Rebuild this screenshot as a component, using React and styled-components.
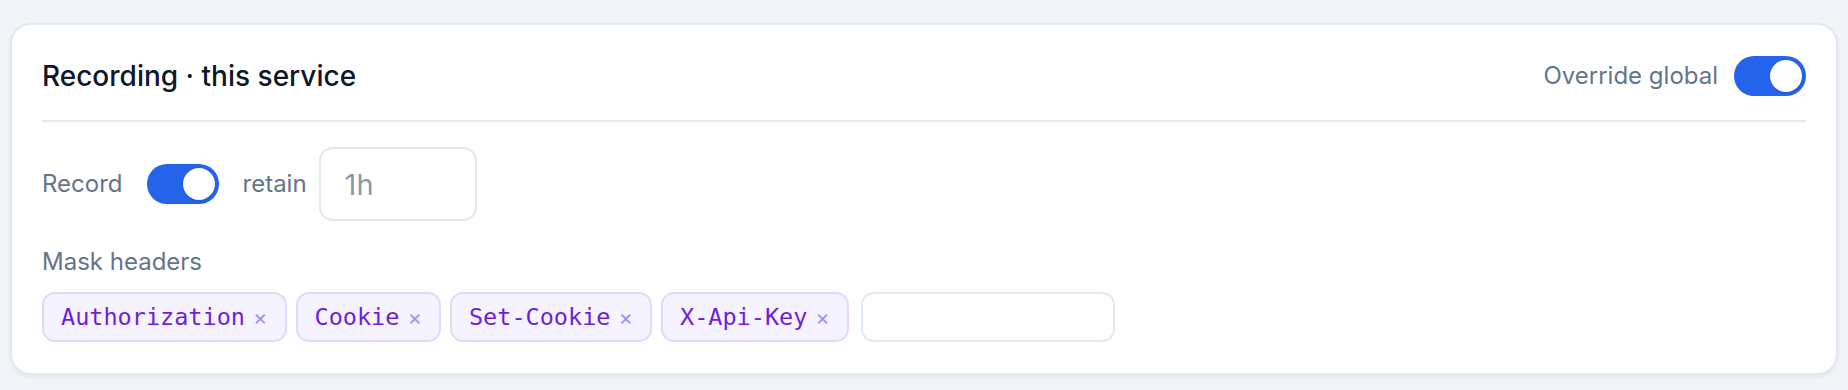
import React from 'react'
import styled, { createGlobalStyle } from 'styled-components'

const GlobalStyle = createGlobalStyle`
	* { box-sizing: border-box; }
	html, body {
		margin: 0;
		padding: 0;
		background: #f1f5f9;
		font-family: Inter, "Noto Sans", sans-serif;
	}
`

const Page = styled.div`
	padding: 23px 10px 16px 10px;
`

const Card = styled.section`
	background: #fff;
	border: 2px solid #e2e8f0;
	border-radius: 21px;
	box-shadow: 0 2px 4px rgba(15, 23, 42, 0.07);
	padding: 31px 30px;
`

const Header = styled.header`
	display: flex;
	align-items: center;
	justify-content: space-between;
	padding-bottom: 24px;
	border-bottom: 2px solid #e2e8f0;
`

const Title = styled.h2`
	margin: 0;
	font-size: 28px;
	font-weight: 500;
	line-height: 40px;
	color: #0f172a;
`

const Group = styled.div`
	display: flex;
	align-items: center;
	gap: ${p => p.gap || 16}px;
`

const Label = styled.span`
	font-size: ${p => p.size || 24}px;
	color: #64748b;
	line-height: 1.2;
`

const Track = styled.button`
	appearance: none;
	border: none;
	margin: 0;
	padding: 4px;
	width: 72px;
	height: 40px;
	border-radius: 20px;
	background: ${p => p.on ? '#2563eb' : '#cbd5e1'};
	display: flex;
	justify-content: ${p => p.on ? 'flex-end' : 'flex-start'};
	cursor: pointer;
	flex-shrink: 0;
`

const Knob = styled.span`
	width: 32px;
	height: 32px;
	border-radius: 50%;
	background: #fff;
	box-shadow: 0 1px 2px rgba(15, 23, 42, 0.2);
`

const Toggle = ({on}) => (
	<Track on={on ? 1 : 0} aria-pressed={on}>
		<Knob/>
	</Track>
)

const Row = styled.div`
	display: flex;
	align-items: center;
	gap: 24px;
	margin-top: 25px;
`

const RetainInput = styled.input`
	width: 158px;
	height: 74px;
	border: 2px solid #e2e8f0;
	border-radius: 14px;
	padding: 0 24px;
	font-family: Inter, "Noto Sans", sans-serif;
	font-size: 29px;
	color: #0f172a;
	outline: none;
	&::placeholder { color: #8d97a8; }
`

const Section = styled.div`
	margin-top: 27px;
	display: flex;
	flex-direction: column;
	gap: 15px;
`

const Chips = styled.div`
	display: flex;
	flex-wrap: wrap;
	gap: 9px;
`

const Chip = styled.span`
	display: inline-flex;
	align-items: center;
	gap: 8px;
	height: 50px;
	padding: 0 17px;
	background: #f5f3ff;
	border: 2px solid #e6d6fd;
	border-radius: 13px;
	font-family: "DejaVu Sans Mono", "Liberation Mono", monospace;
	font-size: 23.5px;
	color: #6d1fd9;
`

const Remove = styled.button`
	appearance: none;
	border: none;
	background: none;
	padding: 0;
	margin: 0;
	font-family: Inter, sans-serif;
	font-size: 22px;
	line-height: 1;
	color: #a78bfa;
	cursor: pointer;
`

const ChipInput = styled.input`
	width: 254px;
	height: 50px;
	margin-left: 3px;
	border: 2px solid #e2e8f0;
	border-radius: 13px;
	padding: 0 16px;
	font-family: "DejaVu Sans Mono", monospace;
	font-size: 23.5px;
	outline: none;
`

const headers = ['Authorization', 'Cookie', 'Set-Cookie', 'X-Api-Key']

export default function App() {
	return (
		<Page>
			<GlobalStyle/>
			<Card>
				<Header>
					<Title>Recording · this service</Title>
					<Group gap={16}>
						<Label>Override global</Label>
						<Toggle on/>
					</Group>
				</Header>
				<Row>
					<Label>Record</Label>
					<Toggle on/>
					<Group gap={12}>
						<Label>retain</Label>
						<RetainInput placeholder="1h"/>
					</Group>
				</Row>
				<Section>
					<Label>Mask headers</Label>
					<Chips>
						{headers.map(h => (
							<Chip key={h}>
								{h}
								<Remove aria-label={`remove ${h}`}>×</Remove>
							</Chip>
						))}
						<ChipInput/>
					</Chips>
				</Section>
			</Card>
		</Page>
	)
}
